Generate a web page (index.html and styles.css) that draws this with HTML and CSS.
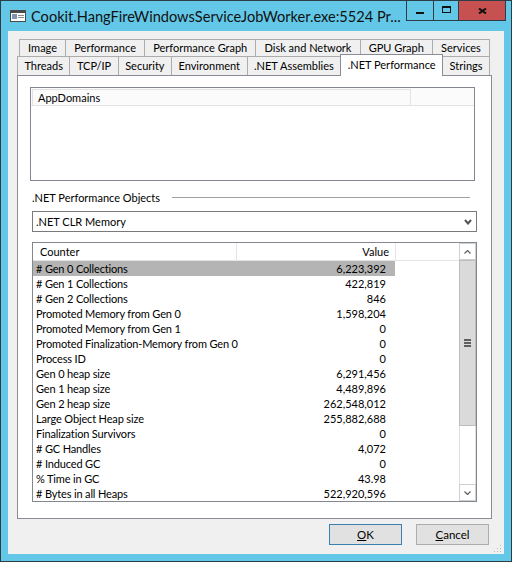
FILE: index.html
```html
<!DOCTYPE html>
<html>
<head>
<meta charset="utf-8">
<link rel="stylesheet" href="styles.css">
</head>
<body>
<div class="window">
  <div class="titlebar">
    <svg class="appicon" width="16" height="12" viewBox="0 0 16 12">
      <rect x="0.5" y="0.5" width="15" height="11" fill="#fdfdfd" stroke="#4a4a4a"/>
      <rect x="1" y="1" width="14" height="2" fill="#4a4a4a"/>
      <rect x="2" y="4" width="5" height="5" fill="#7f94ad"/>
      <rect x="8" y="5" width="6" height="1" fill="#8a8a8a"/>
      <rect x="8" y="7" width="6" height="1" fill="#8a8a8a"/>
    </svg>
    <span class="title">Cookit.HangFireWindowsServiceJobWorker.exe:5524 Pr...</span>
    <div class="caps">
      <div class="cap cap-min"><span class="min-glyph"></span></div>
      <div class="cap cap-max"><span class="max-glyph"></span></div>
      <div class="cap cap-close">
        <svg width="9" height="6" viewBox="0 0 9 6"><path d="M1 0.5 L8 5.5 M8 0.5 L1 5.5" stroke="#111" stroke-width="2" fill="none"/></svg>
      </div>
    </div>
  </div>

  <div class="client">
    <div class="tabs">
      <div class="tabrow row1">
        <div class="tab">Image</div>
        <div class="tab">Performance</div>
        <div class="tab">Performance Graph</div>
        <div class="tab">Disk and Network</div>
        <div class="tab">GPU Graph</div>
        <div class="tab">Services</div>
      </div>
      <div class="tabrow row2">
        <div class="tab">Threads</div>
        <div class="tab">TCP/IP</div>
        <div class="tab">Security</div>
        <div class="tab">Environment</div>
        <div class="tab">.NET Assemblies</div>
        <div class="tab active">.NET Performance</div>
        <div class="tab">Strings</div>
      </div>
    </div>

    <div class="panel">
      <div class="listview appdomains">
        <div class="ad-header">
          <div class="ad-col1">AppDomains</div>
          <div class="ad-col2"></div>
        </div>
      </div>

      <div class="groupline">
        <span class="grouplabel">.NET Performance Objects</span>
        <div class="rule"></div>
      </div>

      <div class="combo">
        <span class="combo-text">.NET CLR Memory</span>
        <svg class="chev" width="8" height="6" viewBox="0 0 8 6"><path d="M1 1 L4 4.5 L7 1" stroke="#555" stroke-width="2" fill="none"/></svg>
      </div>

      <div class="listview counters">
        <div class="lv-main">
          <div class="hdr">
            <div class="h1">Counter</div>
            <div class="h2">Value</div>
          </div>
          <div class="row sel"><div class="c1"># Gen 0 Collections</div><div class="c2">6,223,392</div></div>
          <div class="row"><div class="c1"># Gen 1 Collections</div><div class="c2">422,819</div></div>
          <div class="row"><div class="c1"># Gen 2 Collections</div><div class="c2">846</div></div>
          <div class="row"><div class="c1">Promoted Memory from Gen 0</div><div class="c2">1,598,204</div></div>
          <div class="row"><div class="c1">Promoted Memory from Gen 1</div><div class="c2">0</div></div>
          <div class="row"><div class="c1">Promoted Finalization-Memory from Gen 0</div><div class="c2">0</div></div>
          <div class="row"><div class="c1">Process ID</div><div class="c2">0</div></div>
          <div class="row"><div class="c1">Gen 0 heap size</div><div class="c2">6,291,456</div></div>
          <div class="row"><div class="c1">Gen 1 heap size</div><div class="c2">4,489,896</div></div>
          <div class="row"><div class="c1">Gen 2 heap size</div><div class="c2">262,548,012</div></div>
          <div class="row"><div class="c1">Large Object Heap size</div><div class="c2">255,882,688</div></div>
          <div class="row"><div class="c1">Finalization Survivors</div><div class="c2">0</div></div>
          <div class="row"><div class="c1"># GC Handles</div><div class="c2">4,072</div></div>
          <div class="row"><div class="c1"># Induced GC</div><div class="c2">0</div></div>
          <div class="row"><div class="c1">% Time in GC</div><div class="c2">43.98</div></div>
          <div class="row"><div class="c1"># Bytes in all Heaps</div><div class="c2">522,920,596</div></div>
        </div>
        <div class="scrollbar">
          <div class="sb-btn">
            <svg width="7" height="4" viewBox="0 0 7 4"><path d="M0.5 3.5 L3.5 0.5 L6.5 3.5" stroke="#606060" stroke-width="1.2" fill="none"/></svg>
          </div>
          <div class="sb-thumb">
            <span class="grip"></span><span class="grip"></span><span class="grip"></span>
          </div>
          <div class="sb-track"></div>
          <div class="sb-btn">
            <svg width="7" height="4" viewBox="0 0 7 4"><path d="M0.5 0.5 L3.5 3.5 L6.5 0.5" stroke="#606060" stroke-width="1.2" fill="none"/></svg>
          </div>
        </div>
      </div>
    </div>

    <div class="footer">
      <button class="btn btn-default"><u>O</u>K</button>
      <button class="btn"><u>C</u>ancel</button>
    </div>
    <svg class="sizegrip" width="8" height="8" viewBox="0 0 8 8">
      <rect x="6" y="0" width="1" height="1" fill="#b8b8b8"/>
      <rect x="3" y="3" width="1" height="1" fill="#b8b8b8"/>
      <rect x="6" y="3" width="1" height="1" fill="#b8b8b8"/>
      <rect x="0" y="6" width="1" height="1" fill="#b8b8b8"/>
      <rect x="3" y="6" width="1" height="1" fill="#b8b8b8"/>
      <rect x="6" y="6" width="1" height="1" fill="#b8b8b8"/>
    </svg>
  </div>
</div>
</body>
</html>
```

FILE: styles.css
```css
* { box-sizing: border-box; }

html, body {
  margin: 0;
  padding: 0;
  width: 512px;
  height: 562px;
  overflow: hidden;
  background: #63c8e8;
}

body {
  font-family: "Lato", "Liberation Sans", sans-serif;
  font-size: 11px;
  color: #000;
}

.window {
  width: 512px;
  height: 562px;
  border: 1px solid #2c3d46;
  background: #63c8e8;
  display: flex;
  flex-direction: column;
}

/* ---------- title bar ---------- */
.titlebar {
  height: 30px;
  flex: 0 0 30px;
  display: flex;
  align-items: flex-start;
}

.appicon {
  margin: 9px 0 0 9px;
  flex: 0 0 auto;
}

.title {
  margin: 6px 0 0 5px;
  font-size: 14.6px;
  line-height: 20px;
  white-space: nowrap;
  overflow: hidden;
  max-width: 374px;
  color: #111;
}

.caps {
  margin-left: auto;
  margin-right: 5px;
  display: flex;
  height: 20px;
}

.cap {
  height: 20px;
  border-bottom: 1px solid #2c3d46;
  border-left: 1px solid #2c3d46;
  display: flex;
  align-items: center;
  justify-content: center;
}

.cap-min { width: 27px; }
.cap-max { width: 25px; }
.cap-close {
  width: 48px;
  background: #c75050;
  border-right: 1px solid #2c3d46;
}

.min-glyph {
  display: block;
  width: 8px;
  height: 2px;
  background: #111;
  margin-top: 5px;
}

.max-glyph {
  display: block;
  width: 9px;
  height: 7px;
  border: 1px solid #111;
  border-top-width: 2px;
  margin-top: -2px;
}

/* ---------- client ---------- */
.client {
  position: relative;
  flex: 1 1 auto;
  margin: 0 7px 7px 7px;
  background: #f0f0f0;
  padding: 8px 12px 0 9px;
  display: flex;
  flex-direction: column;
}

.tabs {
  display: flex;
  flex-direction: column;
}

.tabrow {
  display: flex;
  align-items: flex-start;
  margin-right: 2px;
}

.row1 {
  height: 17px;
  margin-left: 3px;
}

.row2 {
  height: 19px;
  margin-left: 1px;
}

.tab {
  flex: 1 1 auto;
  text-align: center;
  white-space: nowrap;
  background: #f0f0f0;
  border: 1px solid #acacac;
  border-bottom: none;
  margin-left: -1px;
  padding: 0 3px;
}

.row1 .tab {
  height: 17px;
  line-height: 16px;
}

.row2 .tab {
  height: 19px;
  line-height: 18px;
}

.row2 .tab.active {
  position: relative;
  z-index: 2;
  background: #fff;
  height: 22px;
  margin-top: -2px;
  line-height: 19px;
  border-color: #898c95;
}

.panel {
  height: 444px;
  flex: 0 0 444px;
  background: #fff;
  border: 1px solid #898c95;
  display: flex;
  flex-direction: column;
  position: relative;
  z-index: 1;
}

/* ---------- appdomains ---------- */
.listview {
  border: 1px solid #828790;
  background: #fff;
}

.appdomains {
  margin: 11px 0 0 12px;
  width: 445px;
  height: 94px;
}

.ad-header {
  display: flex;
  height: 18px;
  background: #fbfbfb;
  border-bottom: 1px solid #e3e3e3;
}

.ad-col1 {
  width: 379px;
  margin: 1px 0 0 1px;
  border: 1px solid #e3e3e3;
  border-bottom: none;
  padding-left: 5px;
  line-height: 15px;
}

.ad-col2 {
  flex: 1 1 auto;
}

/* ---------- group line ---------- */
.groupline {
  display: flex;
  align-items: center;
  margin: 8px 21px 0 14px;
  height: 16px;
}

.grouplabel {
  white-space: nowrap;
}

.rule {
  flex: 1 1 auto;
  height: 1px;
  background: #a0a0a0;
  margin-left: 12px;
}

/* ---------- combo ---------- */
.combo {
  margin: 6px 0 0 14px;
  width: 445px;
  height: 21px;
  border: 1px solid #7a7a7a;
  display: flex;
  align-items: center;
  padding: 0 4px 0 3px;
}

.combo-text {
  flex: 1 1 auto;
}

.chev {
  margin-top: 1px;
}

/* ---------- counters list ---------- */
.counters {
  margin: 10px 0 0 14px;
  width: 445px;
  height: 260px;
  display: flex;
  overflow: hidden;
}

.lv-main {
  flex: 1 1 auto;
  overflow: hidden;
}

.hdr {
  display: flex;
  height: 18px;
  border-bottom: 1px solid #e5e5e5;
}

.h1 {
  width: 204px;
  border-right: 1px solid #e5e5e5;
  padding-left: 7px;
  line-height: 18px;
}

.h2 {
  width: 159px;
  border-right: 1px solid #e5e5e5;
  text-align: right;
  padding-right: 6px;
  line-height: 18px;
}

.row {
  display: flex;
  width: 362px;
  height: 15px;
  line-height: 15px;
  white-space: nowrap;
}

.row.sel {
  background: #b4b4b4;
}

.c1 {
  flex: 0 0 204px;
  padding-left: 3px;
  letter-spacing: -0.15px;
}

.c2 {
  flex: 1 1 auto;
  text-align: right;
  padding-right: 9px;
}

.scrollbar {
  flex: 0 0 17px;
  width: 17px;
  display: flex;
  flex-direction: column;
  background: #fff;
  border-left: 1px solid #e0e0e0;
  border-right: 1px solid #e0e0e0;
}

.sb-btn {
  height: 17px;
  flex: 0 0 17px;
  border: 1px solid #cfcfcf;
  margin: 0 -1px;
  background: #fff;
  display: flex;
  align-items: center;
  justify-content: center;
}

.sb-thumb {
  height: 166px;
  flex: 0 0 166px;
  background: #dadada;
  border: 1px solid #bdbdbd;
  margin: 0 -1px;
  display: flex;
  flex-direction: column;
  align-items: center;
  justify-content: center;
  gap: 1px;
}

.grip {
  display: block;
  width: 7px;
  height: 2px;
  background: #606060;
}

.sb-track {
  flex: 1 1 auto;
}

/* ---------- footer ---------- */
.footer {
  flex: 0 0 auto;
  display: flex;
  justify-content: flex-end;
  gap: 14px;
  padding-top: 5px;
  margin-right: 3px;
}

.btn {
  width: 73px;
  height: 21px;
  border: 1px solid #adadad;
  background: #e1e1e1;
  font-family: "Lato", "Liberation Sans", sans-serif;
  font-size: 11.5px;
  color: #000;
  padding: 0;
  margin: 0;
  line-height: 18px;
}

.btn-default {
  border-color: #3c7fb1;
}

.sizegrip {
  position: absolute;
  right: 2px;
  bottom: 1px;
}
```
